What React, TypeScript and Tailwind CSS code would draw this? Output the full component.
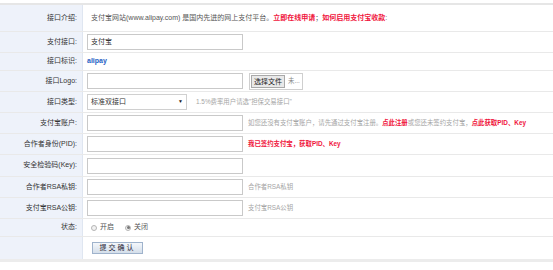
import React from 'react';

const font = { fontFamily: '"Liberation Sans", "Noto Sans CJK SC", sans-serif' };

const Row: React.FC<{ label: string; h: string; children?: React.ReactNode }> = ({ label, h, children }) => (
  <div className={`flex border-b border-[#e9e9e9] ${h}`}>
    <div className="w-[83px] shrink-0 bg-[#eef2fa] border-r border-[#dfe6f1] flex items-center justify-end pr-[5px] text-[7px] text-[#333] whitespace-nowrap">
      {label}
    </div>
    <div className="flex-1 flex items-center pl-[4px] text-[7px] text-[#666]">{children}</div>
  </div>
);

const Input: React.FC<{ value?: string }> = ({ value }) => (
  <div className="w-[156px] h-[16px] border border-[#c9c9c9] bg-white flex items-center px-[3px] text-[7px] text-[#333] shrink-0">
    {value}
  </div>
);

const Note: React.FC<{ children: React.ReactNode }> = ({ children }) => (
  <span className="ml-[5px] text-[6.4px] text-[#a5a5a5] whitespace-nowrap">{children}</span>
);

const Red: React.FC<{ children: React.ReactNode }> = ({ children }) => (
  <span className="text-[#f0143c] font-bold">{children}</span>
);

const Radio: React.FC<{ checked?: boolean; label: string }> = ({ checked, label }) => (
  <span className="flex items-center mr-[11px]">
    <span className="w-[6px] h-[6px] rounded-full border border-[#b5b5b5] bg-[#f2f2f2] flex items-center justify-center mr-[3px]">
      {checked && <span className="w-[3px] h-[3px] rounded-full bg-[#777]" />}
    </span>
    <span className="text-[#555]">{label}</span>
  </span>
);

export default function App() {
  return (
    <div className="w-[553px] h-[270px] bg-white overflow-hidden" style={font}>
      <div className="h-[3px]" />
      <div className="h-[2px] bg-[#e6e6e6]" />
      <Row label="接口介绍:" h="h-[27px]">
        <span className="pl-[4px] whitespace-nowrap text-[#555]">
          支付宝网站(www.alipay.com) 是国内先进的网上支付平台。<Red>立即在线申请</Red>；<Red>如何启用支付宝收款</Red>:
        </span>
      </Row>
      <Row label="支付接口:" h="h-[21px]">
        <Input value="支付宝" />
      </Row>
      <Row label="接口标识:" h="h-[18px]">
        <span className="font-bold text-[#1f5fc4] text-[7px]">alipay</span>
      </Row>
      <Row label="接口Logo:" h="h-[21px]">
        <Input />
        <div className="ml-[6px] h-[17px] w-[54px] border border-[#cfcfcf] flex items-center px-[1px] gap-[3px] whitespace-nowrap">
          <span className="bg-[#e9e9e9] border border-[#a9a9a9] px-[2px] text-[7px] text-[#222] leading-[11px] whitespace-nowrap">选择文件</span>
          <span className="text-[#888] text-[6.4px]">未...</span>
        </div>
      </Row>
      <Row label="接口类型:" h="h-[21px]">
        <div className="w-[100px] h-[16px] border border-[#d0d0d0] bg-white flex items-center justify-between px-[3px] text-[#333] shrink-0">
          <span>标准双接口</span>
          <span className="text-[5px] text-[#222]">▼</span>
        </div>
        <span className="ml-[9px] text-[6.4px] text-[#a5a5a5] whitespace-nowrap">1.5%费率用户请选"担保交易接口"</span>
      </Row>
      <Row label="支付宝账户:" h="h-[21px]">
        <Input />
        <Note>
          如您还没有支付宝账户，请先通过支付宝注册。<Red>点此注册</Red>或您还未签约支付宝，<Red>点此获取PID、Key</Red>
        </Note>
      </Row>
      <Row label="合作者身份(PID):" h="h-[21px]">
        <Input />
        <span className="ml-[5px] text-[6.4px] whitespace-nowrap">
          <Red>我已签约支付宝，获取PID、Key</Red>
        </span>
      </Row>
      <Row label="安全检验码(Key):" h="h-[22px]">
        <Input />
      </Row>
      <Row label="合作者RSA私钥:" h="h-[21px]">
        <Input />
        <Note>合作者RSA私钥</Note>
      </Row>
      <Row label="支付宝RSA公钥:" h="h-[21px]">
        <Input />
        <Note>支付宝RSA公钥</Note>
      </Row>
      <Row label="状态:" h="h-[18px]">
        <div className="flex items-center pl-[4px]">
          <Radio label="开启" />
          <Radio checked label="关闭" />
        </div>
      </Row>
      <div className="flex h-[22px]">
        <div className="w-[83px] shrink-0 bg-[#eef2fa] border-r border-[#dfe6f1]" />
        <div className="flex-1 flex items-center pl-[9px]">
          <div className="w-[51px] h-[12px] border border-[#9fb3cc] bg-gradient-to-b from-[#f4f7fb] to-[#d4deea] flex items-center justify-center text-[7px] text-[#223] tracking-[2px]">
            提交确认
          </div>
        </div>
      </div>
      <div className="h-[3px] bg-[#ececec]" />
    </div>
  );
}
